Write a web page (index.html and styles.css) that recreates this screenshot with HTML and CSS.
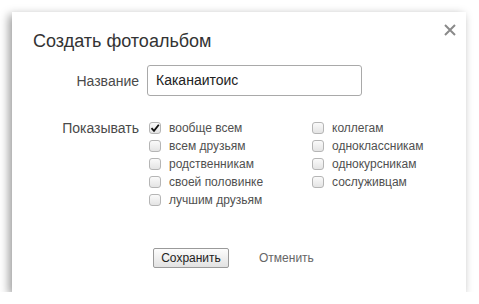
FILE: index.html
```html
<!DOCTYPE html>
<html lang="ru">
<head>
    <meta charset="UTF-8">
    <title>Создать фотоальбом</title>
    <link rel="stylesheet" href="styles.css">
</head>
<body>
    <div class="dialog">
        <!-- Закрыть -->
        <span class="close">
            <svg width="12" height="12" viewBox="0 0 12 12"><path d="M1 1L11 11M11 1L1 11" stroke="#8a8a8a" stroke-width="2"/></svg>
        </span>

        <h1 class="title">Создать фотоальбом</h1>

        <div class="row">
            <label class="label">Название</label>
            <div class="field">Каканаитоис</div>
        </div>

        <div class="row row-options">
            <span class="label">Показывать</span>
            <div class="options">
                <div class="option"><span class="box"><svg width="10" height="10" viewBox="0 0 10 10"><path d="M1.5 5.2L4 7.8L8.8 1.8" fill="none" stroke="#111" stroke-width="1.8"/></svg></span>вообще всем</div>
                <div class="option"><span class="box"></span>коллегам</div>
                <div class="option"><span class="box"></span>всем друзьям</div>
                <div class="option"><span class="box"></span>одноклассникам</div>
                <div class="option"><span class="box"></span>родственникам</div>
                <div class="option"><span class="box"></span>однокурсникам</div>
                <div class="option"><span class="box"></span>своей половинке</div>
                <div class="option"><span class="box"></span>сослуживцам</div>
                <div class="option"><span class="box"></span>лучшим друзьям</div>
            </div>
        </div>

        <div class="actions">
            <button class="btn-save">Сохранить</button>
            <span class="btn-cancel">Отменить</span>
        </div>
    </div>
</body>
</html>
```

FILE: styles.css
```css
body {
    margin: 0;
    background: #ffffff;
    font-family: "Liberation Sans", Arial, sans-serif;
    color: #333333;
}

/* Ventana del diálogo */
.dialog {
    position: relative;
    margin: 12px 0 0 12px;
    width: 454px;
    height: 280px;
    box-sizing: border-box;
    background: #ffffff;
    box-shadow: -3px 3px 9px rgba(0, 0, 0, 0.4);
}

.close {
    position: absolute;
    top: 12px;
    right: 10px;
    width: 12px;
    height: 12px;
    display: flex;
}

.title {
    margin: 0;
    padding: 18px 0 0 21px;
    font-size: 18px;
    line-height: 22px;
    font-weight: normal;
    color: #333333;
}

.row {
    display: flex;
    align-items: center;
    gap: 8px;
    margin-top: 13px;
}

.label {
    width: 127px;
    text-align: right;
    font-size: 14px;
    color: #4a4a4a;
}

.field {
    width: 215px;
    height: 31px;
    box-sizing: border-box;
    border: 1px solid #a9a9a9;
    border-radius: 3px;
    padding: 0 8px;
    font-size: 14px;
    line-height: 29px;
    color: #222222;
}

.row-options {
    align-items: flex-start;
    margin-top: 23px;
}

.row-options .label {
    line-height: 18px;
}

.options {
    display: grid;
    grid-template-columns: 163px auto;
    padding-left: 2px;
}

.option {
    display: flex;
    align-items: center;
    height: 18px;
    font-size: 12px;
    color: #505050;
}

.box {
    width: 12px;
    height: 12px;
    box-sizing: border-box;
    margin-right: 8px;
    border: 1px solid #b5b5b5;
    border-radius: 3px;
    background: linear-gradient(#fafafa, #e4e4e4);
    display: flex;
    align-items: center;
    justify-content: center;
}

.actions {
    display: flex;
    align-items: center;
    gap: 30px;
    margin-top: 39px;
    padding-left: 141px;
}

.btn-save {
    width: 76px;
    height: 20px;
    padding: 0;
    font-family: inherit;
    font-size: 12px;
    color: #222222;
    border: 1px solid #9a9a9a;
    border-radius: 2px;
    background: linear-gradient(#fdfdfd, #e2e2e2);
}

.btn-cancel {
    font-size: 12px;
    color: #666666;
}
```
